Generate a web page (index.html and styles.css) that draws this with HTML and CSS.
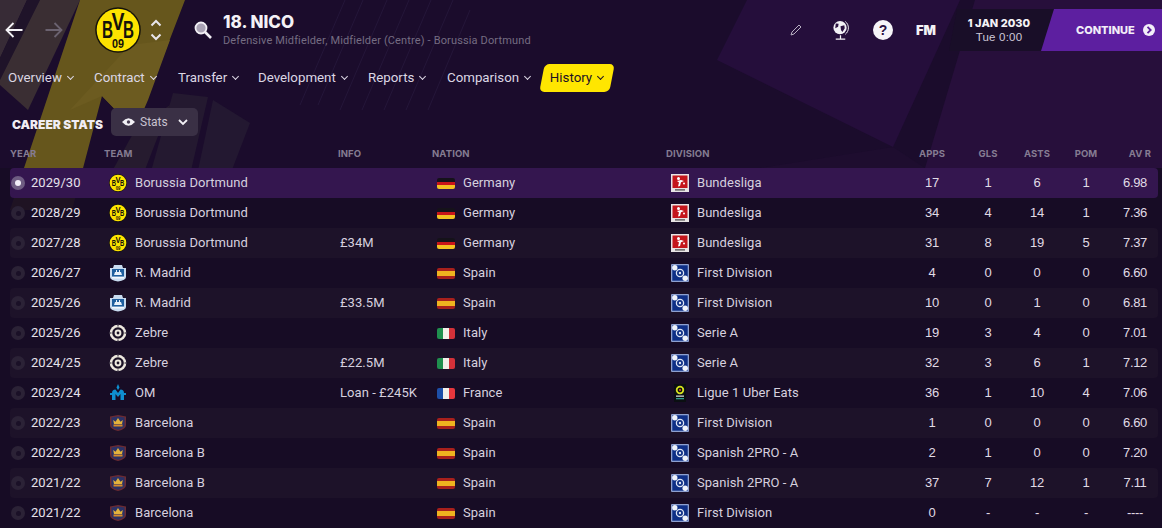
FILE: index.html
```html
<!DOCTYPE html>
<html lang="en">
<head>
<meta charset="utf-8">
<title>18. NICO - Career Stats</title>
<link rel="stylesheet" href="styles.css">
</head>
<body>
<svg class="defs" width="0" height="0" aria-hidden="true">
  <defs>
    <symbol id="bvb" viewBox="0 0 46 46">
      <circle cx="23" cy="23" r="22.8" fill="#15130a"/>
      <circle cx="23" cy="23" r="21.300" fill="#fde300"/>
      <text x="12.500" y="31" class="bvb-l" textLength="11" lengthAdjust="spacingAndGlyphs">B</text>
      <text x="23" y="23" class="bvb-l" textLength="13" lengthAdjust="spacingAndGlyphs">V</text>
      <text x="33.500" y="31" class="bvb-l" textLength="11" lengthAdjust="spacingAndGlyphs">B</text>
      <text x="23" y="41" class="bvb-n" textLength="12" lengthAdjust="spacingAndGlyphs">09</text>
    </symbol>
    <symbol id="madrid" viewBox="0 0 18 18">
      <path d="M1 4h3l1-3h8l1 3h3v9q0 3-8 4.500q-8-1.500-8-4.500z" fill="#c9dcf0"/>
      <rect x="3" y="5" width="12" height="7.500" fill="#1f5f9e"/>
      <path d="M5 11l1-3h1v-2h1v2h2v-2h1v2h1l1 3z" fill="#e8f1fa"/>
      <rect x="3" y="13" width="12" height="1.500" fill="#f4f8fc"/>
    </symbol>
    <symbol id="zebre" viewBox="0 0 18 18">
      <circle cx="9" cy="9" r="8.300" fill="#eee9df"/>
      <circle cx="9" cy="9" r="5.800" fill="#1b1226"/>
      <circle cx="9" cy="9" r="3.400" fill="#eee9df"/>
      <circle cx="9" cy="9" r="1.400" fill="#1b1226"/>
      <path d="M9 .500v2M9 15.500v2M.5 9h2M15.500 9h2" stroke="#1b1226" stroke-width="1"/>
    </symbol>
    <symbol id="om" viewBox="0 0 18 18">
      <path d="M9 0l1.500 3.500L9 6 7.500 3.500z" fill="#0f8fd0"/>
      <path d="M3 16V9q0-3.500 3.500-3.500L9 9l2.500-3.500Q15 5.500 15 9v7h-3.500V10L9 13l-2.500-3v6z" fill="#0f8fd0"/>
      <rect x="1" y="9" width="3" height="2" fill="#0f8fd0"/><rect x="14" y="9" width="3" height="2" fill="#0f8fd0"/>
    </symbol>
    <symbol id="barca" viewBox="0 0 18 18">
      <path d="M1 2.500L9 1l8 1.500v8.500q0 4-8 6q-8-2-8-6z" fill="#6a2b33"/>
      <path d="M2.500 3.500L9 2.400l6.500 1.100v7.500q0 3-6.500 4.700q-6.500-1.700-6.500-4.700z" fill="#2b3266"/>
      <path d="M5 10l-.8-4 2.300 1.800L9 4l2.500 3.800L13.800 6 13 10z" fill="#e3b23c"/>
      <rect x="4.500" y="10.500" width="9" height="2" fill="#d98c2b"/>
    </symbol>
    <symbol id="bundes" viewBox="0 0 18 18">
      <rect width="18" height="18" fill="#e8e4e4"/>
      <rect x="1.500" y="1.500" width="15" height="12.500" fill="#c4161c"/>
      <circle cx="7.500" cy="4.500" r="1.500" fill="#fff"/>
      <path d="M6 7l4-1 3 1-3 1.200-1 3.800-2 .5 1-4z" fill="#fff"/>
      <circle cx="13" cy="9.500" r="1" fill="#fff"/>
      <rect x="4" y="15.300" width="10" height="1.200" fill="#444"/>
    </symbol>
    <symbol id="league" viewBox="0 0 18 18">
      <rect width="18" height="18" rx="1" fill="#8ea0cf"/>
      <rect x="1.300" y="1.300" width="15.400" height="15.400" fill="#0e2f86"/>
      <circle cx="9" cy="9" r="3.600" fill="none" stroke="#dfe6f5" stroke-width="1.300"/>
      <circle cx="9" cy="9" r="1.200" fill="#dfe6f5"/>
      <circle cx="3.800" cy="3.800" r="2.700" fill="#f0f3fa"/>
      <circle cx="14.200" cy="14.200" r="2.700" fill="#f0f3fa"/>
    </symbol>
    <symbol id="ligue1" viewBox="0 0 18 18">
      <rect x="3" width="12" height="18" fill="#0b0f12"/>
      <circle cx="9" cy="6" r="3.300" fill="none" stroke="#d6e21f" stroke-width="1.800"/>
      <circle cx="9" cy="6" r="1" fill="#f05a28"/>
      <rect x="5" y="11.500" width="8" height="1.300" fill="#cfd8d8"/>
      <rect x="5" y="14" width="8" height="1.300" fill="#2f9e8a"/>
    </symbol>
  </defs>
</svg>

<main class="app">
  <svg class="backdrop" viewBox="0 0 1162 528" preserveAspectRatio="none" aria-hidden="true">
    <rect width="1162" height="528" fill="#1b0c2c"/>
    <polygon points="0,0 27,0 0,58" fill="#372b36"/>
    <polygon points="27,0 40,0 0,80 0,58" fill="#1f1329"/>
    <polygon points="40,0 80,0 28,110 0,85 0,80" fill="#3a2e33"/>
    <polygon points="80,0 185,0 135,130 102,96 72,210 10,210" fill="#66561c"/>
    <polygon points="130,45 170,40 148,100 135,130 102,96 70,110" fill="#6c5b20"/>
    <polygon points="135,130 170,105 143,175 110,175" fill="#261b2f"/>
    <polygon points="173,93 208,97 190,175 150,175" fill="#241930"/>
    <polygon points="213,100 250,123 230,175 197,175" fill="#231831"/>
    <g stroke="#2e2046" stroke-width="1" opacity=".5">
      <path d="M300 105L345 0M318 105L363 0M340 110L387 0M362 110L409 0M384 110L431 0M406 110L453 0M428 110L470 10"/>
    </g>
    <polygon points="747,0 960,0 893,147 717,60" fill="#250e3b"/>
    <polygon points="975,0 1162,0 1162,168 925,168" fill="#270f3b"/>
    <polygon points="893,147 925,168 760,168" fill="#1e0d2f"/>
    <rect y="168" width="1162" height="360" fill="#170c25" opacity=".9"/>
  </svg>

  <header class="topbar">
    <button class="arrow" aria-label="Back">
      <svg viewBox="0 0 18 18" class="arrow-icon"><path d="M17.500 9H1.500M8.500 2L1.500 9l7 7" fill="none" stroke="currentColor" stroke-width="1.800"/></svg>
    </button>
    <button class="arrow arrow-off" aria-label="Forward">
      <svg viewBox="0 0 18 18" class="arrow-icon"><path d="M.5 9h16M9.500 2l7 7-7 7" fill="none" stroke="currentColor" stroke-width="1.800"/></svg>
    </button>
    <svg class="club-badge"><use href="#bvb"/></svg>
    <div class="stepper">
      <svg viewBox="0 0 12 8" class="step"><path d="M1.500 6.500L6 2l4.500 4.500" fill="none" stroke="currentColor" stroke-width="2"/></svg>
      <svg viewBox="0 0 12 8" class="step"><path d="M1.500 1.500L6 6l4.500-4.500" fill="none" stroke="currentColor" stroke-width="2"/></svg>
    </div>
    <svg class="search" viewBox="0 0 18 18"><circle cx="7" cy="7" r="5.500" fill="#a9a2b4" stroke="#f2f0f5" stroke-width="1.800"/><path d="M11 11l6 6" stroke="#f2f0f5" stroke-width="2.600"/></svg>
    <div class="title-block">
      <h1 class="player-name">18. NICO</h1>
      <p class="player-sub">Defensive Midfielder, Midfielder (Centre) - Borussia Dortmund</p>
    </div>
    <div class="top-actions">
      <svg class="pencil" viewBox="0 0 14 14"><path d="M2 12l1-3 7-7 2 2-7 7z" fill="none" stroke="#b8b0c2" stroke-width="1"/></svg>
      <svg class="globe" viewBox="0 0 20 22"><circle cx="9.500" cy="8" r="7" fill="#f2f0f5"/><path d="M5 3.500l3 .5-.5 3-3 1.500zM10 6.500l4-1 .5 3-2.500 4-1.500-2z" fill="#2a1040"/><path d="M15 1.500a8.500 8.500 0 0 1 0 13.500" fill="none" stroke="#f2f0f5" stroke-width="1"/><path d="M5 20h10M10 16v4" stroke="#f2f0f5" stroke-width="1.300"/></svg>
      <span class="help">?</span>
      <span class="fm">FM</span>
      <div class="date-box">
        <strong class="date-main">1 JAN 2030</strong>
        <span class="date-time">Tue 0:00</span>
      </div>
      <button class="continue">CONTINUE
        <svg class="continue-icon" viewBox="0 0 12 12"><circle cx="6" cy="6" r="6" fill="#f2eef8"/><path d="M4.500 2.800L7.700 6l-3.200 3.200" fill="none" stroke="#5c1f9e" stroke-width="1.800"/></svg>
      </button>
    </div>
  </header>

  <nav class="tabs">
    <a class="tab tab-overview">Overview <i class="caret"></i></a>
    <a class="tab tab-contract">Contract <i class="caret"></i></a>
    <a class="tab tab-transfer">Transfer <i class="caret"></i></a>
    <a class="tab tab-dev">Development <i class="caret"></i></a>
    <a class="tab tab-reports">Reports <i class="caret"></i></a>
    <a class="tab tab-compare">Comparison <i class="caret"></i></a>
    <a class="tab tab-active">History <i class="caret"></i></a>
  </nav>

  <div class="section-head">
    <h2 class="section-title">CAREER STATS</h2>
    <button class="view-btn">
      <svg class="eye" viewBox="0 0 14 10"><path d="M0 5q7-8 14 0q-7 8-14 0z" fill="#f2f0f5"/><circle cx="7" cy="5" r="1.800" fill="#463c52"/></svg>
      Stats
      <svg class="view-caret" viewBox="0 0 10 7"><path d="M1 1l4 4 4-4" fill="none" stroke="#f2f0f5" stroke-width="1.800"/></svg>
    </button>
  </div>

  <section class="table">
    <div class="grid col-head">
      <span>YEAR</span><span>TEAM</span><span>INFO</span><span>NATION</span><span>DIVISION</span>
      <span class="num">APPS</span><span class="num">GLS</span><span class="num">ASTS</span><span class="num">POM</span><span class="num avr-head">AV R</span>
    </div>

    <div class="grid row row-selected">
      <span class="year"><i class="radio radio-on"></i>2029/30</span>
      <span class="icon-cell"><svg class="crest"><use href="#bvb"/></svg>Borussia Dortmund</span>
      <span class="info"></span>
      <span class="icon-cell"><i class="flag flag-de"></i>Germany</span>
      <span class="icon-cell"><svg class="crest"><use href="#bundes"/></svg>Bundesliga</span>
      <span class="num">17</span><span class="num">1</span><span class="num">6</span><span class="num">1</span><span class="num">6.98</span>
    </div>
    <div class="grid row">
      <span class="year"><i class="radio"></i>2028/29</span>
      <span class="icon-cell"><svg class="crest"><use href="#bvb"/></svg>Borussia Dortmund</span>
      <span class="info"></span>
      <span class="icon-cell"><i class="flag flag-de"></i>Germany</span>
      <span class="icon-cell"><svg class="crest"><use href="#bundes"/></svg>Bundesliga</span>
      <span class="num">34</span><span class="num">4</span><span class="num">14</span><span class="num">1</span><span class="num">7.36</span>
    </div>
    <div class="grid row row-alt">
      <span class="year"><i class="radio"></i>2027/28</span>
      <span class="icon-cell"><svg class="crest"><use href="#bvb"/></svg>Borussia Dortmund</span>
      <span class="info">£34M</span>
      <span class="icon-cell"><i class="flag flag-de"></i>Germany</span>
      <span class="icon-cell"><svg class="crest"><use href="#bundes"/></svg>Bundesliga</span>
      <span class="num">31</span><span class="num">8</span><span class="num">19</span><span class="num">5</span><span class="num">7.37</span>
    </div>
    <div class="grid row">
      <span class="year"><i class="radio"></i>2026/27</span>
      <span class="icon-cell"><svg class="crest"><use href="#madrid"/></svg>R. Madrid</span>
      <span class="info"></span>
      <span class="icon-cell"><i class="flag flag-es"></i>Spain</span>
      <span class="icon-cell"><svg class="crest"><use href="#league"/></svg>First Division</span>
      <span class="num">4</span><span class="num">0</span><span class="num">0</span><span class="num">0</span><span class="num">6.60</span>
    </div>
    <div class="grid row row-alt">
      <span class="year"><i class="radio"></i>2025/26</span>
      <span class="icon-cell"><svg class="crest"><use href="#madrid"/></svg>R. Madrid</span>
      <span class="info">£33.5M</span>
      <span class="icon-cell"><i class="flag flag-es"></i>Spain</span>
      <span class="icon-cell"><svg class="crest"><use href="#league"/></svg>First Division</span>
      <span class="num">10</span><span class="num">0</span><span class="num">1</span><span class="num">0</span><span class="num">6.81</span>
    </div>
    <div class="grid row">
      <span class="year"><i class="radio"></i>2025/26</span>
      <span class="icon-cell"><svg class="crest"><use href="#zebre"/></svg>Zebre</span>
      <span class="info"></span>
      <span class="icon-cell"><i class="flag flag-it"></i>Italy</span>
      <span class="icon-cell"><svg class="crest"><use href="#league"/></svg>Serie A</span>
      <span class="num">19</span><span class="num">3</span><span class="num">4</span><span class="num">0</span><span class="num">7.01</span>
    </div>
    <div class="grid row row-alt">
      <span class="year"><i class="radio"></i>2024/25</span>
      <span class="icon-cell"><svg class="crest"><use href="#zebre"/></svg>Zebre</span>
      <span class="info">£22.5M</span>
      <span class="icon-cell"><i class="flag flag-it"></i>Italy</span>
      <span class="icon-cell"><svg class="crest"><use href="#league"/></svg>Serie A</span>
      <span class="num">32</span><span class="num">3</span><span class="num">6</span><span class="num">1</span><span class="num">7.12</span>
    </div>
    <div class="grid row">
      <span class="year"><i class="radio"></i>2023/24</span>
      <span class="icon-cell"><svg class="crest"><use href="#om"/></svg>OM</span>
      <span class="info">Loan - £245K</span>
      <span class="icon-cell"><i class="flag flag-fr"></i>France</span>
      <span class="icon-cell"><svg class="crest"><use href="#ligue1"/></svg>Ligue 1 Uber Eats</span>
      <span class="num">36</span><span class="num">1</span><span class="num">10</span><span class="num">4</span><span class="num">7.06</span>
    </div>
    <div class="grid row row-alt">
      <span class="year"><i class="radio"></i>2022/23</span>
      <span class="icon-cell"><svg class="crest"><use href="#barca"/></svg>Barcelona</span>
      <span class="info"></span>
      <span class="icon-cell"><i class="flag flag-es"></i>Spain</span>
      <span class="icon-cell"><svg class="crest"><use href="#league"/></svg>First Division</span>
      <span class="num">1</span><span class="num">0</span><span class="num">0</span><span class="num">0</span><span class="num">6.60</span>
    </div>
    <div class="grid row">
      <span class="year"><i class="radio"></i>2022/23</span>
      <span class="icon-cell"><svg class="crest"><use href="#barca"/></svg>Barcelona B</span>
      <span class="info"></span>
      <span class="icon-cell"><i class="flag flag-es"></i>Spain</span>
      <span class="icon-cell"><svg class="crest"><use href="#league"/></svg>Spanish 2PRO - A</span>
      <span class="num">2</span><span class="num">1</span><span class="num">0</span><span class="num">0</span><span class="num">7.20</span>
    </div>
    <div class="grid row row-alt">
      <span class="year"><i class="radio"></i>2021/22</span>
      <span class="icon-cell"><svg class="crest"><use href="#barca"/></svg>Barcelona B</span>
      <span class="info"></span>
      <span class="icon-cell"><i class="flag flag-es"></i>Spain</span>
      <span class="icon-cell"><svg class="crest"><use href="#league"/></svg>Spanish 2PRO - A</span>
      <span class="num">37</span><span class="num">7</span><span class="num">12</span><span class="num">1</span><span class="num">7.11</span>
    </div>
    <div class="grid row">
      <span class="year"><i class="radio"></i>2021/22</span>
      <span class="icon-cell"><svg class="crest"><use href="#barca"/></svg>Barcelona</span>
      <span class="info"></span>
      <span class="icon-cell"><i class="flag flag-es"></i>Spain</span>
      <span class="icon-cell"><svg class="crest"><use href="#league"/></svg>First Division</span>
      <span class="num">0</span><span class="num">-</span><span class="num">-</span><span class="num">-</span><span class="num">----</span>
    </div>
  </section>
</main>
</body>
</html>
```

FILE: styles.css
```css
* { box-sizing: border-box; }

html, body {
  margin: 0;
  padding: 0;
  background: #170c25;
}

.defs { position: absolute; }

.bvb-l {
  font-family: "Liberation Sans", sans-serif;
  font-weight: 700;
  font-size: 23px;
  text-anchor: middle;
  fill: #15130a;
}
.bvb-n {
  font-family: "Liberation Sans", sans-serif;
  font-weight: 700;
  font-size: 12px;
  text-anchor: middle;
  fill: #15130a;
}

.app {
  position: relative;
  width: 1162px;
  height: 528px;
  overflow: hidden;
  font-family: Roboto, "Liberation Sans", sans-serif;
  color: #dcd7e4;
}

.backdrop {
  position: absolute;
  inset: 0;
  width: 100%;
  height: 100%;
}

.topbar, .tabs, .section-head, .table { position: relative; }

/* Top bar */
.topbar {
  display: flex;
  align-items: center;
  height: 60px;
  padding-left: 5px;
}

.arrow {
  display: flex;
  width: 18px;
  height: 18px;
  margin-right: 22px;
  padding: 0;
  border: 0;
  background: none;
  color: #f4f2f6;
}
.arrow-off { color: #6b6270; margin-right: 32px; }
.arrow-icon { width: 18px; height: 18px; }

.club-badge { width: 46px; height: 46px; }

.stepper {
  display: flex;
  flex-direction: column;
  gap: 6px;
  margin-left: 9px;
  color: #e8e5ec;
}
.step { display: block; width: 12px; height: 8px; }

.search { width: 18px; height: 18px; margin-left: 32px; margin-top: -1px; }

.title-block {
  align-self: flex-start;
  margin-left: 11px;
  padding-top: 12px;
}

.player-name {
  margin: 0;
  font-family: Inter, sans-serif;
  font-size: 17px;
  line-height: 20px;
  font-weight: 800;
  color: #f4f2f6;
}

.player-sub {
  margin: 2px 0 0;
  font-size: 11px;
  line-height: 13px;
  color: #756c82;
  letter-spacing: .14px;
}

.top-actions {
  display: flex;
  align-items: center;
  margin-left: auto;
  height: 42px;
}

.pencil { width: 14px; height: 14px; margin-right: 28px; }
.globe { width: 19px; height: 21px; margin-right: 23px; }

.help {
  display: flex;
  align-items: center;
  justify-content: center;
  width: 20px;
  height: 20px;
  margin-right: 23px;
  border-radius: 50%;
  background: #f6f4f8;
  color: #2a1040;
  font: 700 14px "Liberation Sans", sans-serif;
}

.fm {
  width: 33px;
  font: 900 13px Inter, sans-serif;
  color: #f4f2f6;
}

.date-box {
  display: flex;
  flex-direction: column;
  align-items: center;
  justify-content: center;
  width: 106px;
  height: 42px;
  margin-right: -14px;
  padding-right: 6px;
  background: #190e28;
  clip-path: polygon(8px 0, 100% 0, 100% 100%, 0 100%);
}
.date-main {
  font: 800 11px/14px Inter, sans-serif;
  color: #f4f2f6;
}
.date-time {
  font: 400 11.500px/15px "Liberation Sans", sans-serif;
  color: #cfc9d8;
  letter-spacing: .2px;
}

.continue {
  display: flex;
  align-items: center;
  position: relative;
  width: 121px;
  height: 42px;
  padding: 0 0 0 35px;
  border: 0;
  background: #5d1fa0;
  clip-path: polygon(13px 0, 100% 0, 100% 100%, 0 100%);
  color: #f2eef8;
  font: 800 11px Inter, sans-serif;
}
.continue-icon { width: 12px; height: 12px; margin-left: 8px; flex: none; }

/* Tabs */
.tabs {
  display: flex;
  align-items: center;
  height: 28px;
  margin-top: 4px;
  padding-left: 8px;
}
.tab {
  display: flex;
  align-items: center;
  gap: 5px;
  height: 28px;
  padding-bottom: 2px;
  font-size: 13.300px;
  color: #dcd7e4;
}
.tab-overview { width: 86px; }
.tab-contract { width: 84px; }
.tab-transfer { width: 80px; }
.tab-dev { width: 110px; }
.tab-reports { width: 79px; }
.tab-compare { width: 93px; }
.tab-active {
  position: relative;
  z-index: 0;
  justify-content: center;
  width: 74px;
  color: #1c1024;
}
.tab-active::before {
  content: "";
  position: absolute;
  inset: 0 2px;
  z-index: -1;
  background: #ffe600;
  border-radius: 5px;
  transform: skewX(-11deg);
}
.caret {
  width: 5px;
  height: 5px;
  margin: -2px 1px 0 1px;
  border-right: 1.300px solid currentColor;
  border-bottom: 1.300px solid currentColor;
  transform: rotate(45deg);
}

/* Section head */
.section-head {
  display: flex;
  align-items: center;
  height: 28px;
  margin-top: 16px;
  padding-left: 12px;
}
.section-title {
  width: 99px;
  margin: 4px 0 0;
  font: 900 12px Inter, sans-serif;
  color: #f0edf3;
  white-space: nowrap;
}
.view-btn {
  display: flex;
  align-items: center;
  width: 87px;
  height: 28px;
  padding: 0 0 0 11px;
  border: 0;
  border-radius: 5px;
  background: #3a3045;
  color: #c8c2d0;
  font: 400 12px Roboto, sans-serif;
}
.eye { width: 13px; height: 10px; margin-right: 5px; }
.view-caret { width: 10px; height: 7px; margin-left: 10px; }

/* Table */
.table { margin: 3px 4px 0 10px; }

.grid {
  display: grid;
  grid-template-columns: 94px 234px 94px 234px 238px 56px 56px 42px 56px 42px;
  align-items: center;
}

.col-head {
  height: 29px;
  font: 700 9.500px Inter, sans-serif;
  color: #857c92;
  letter-spacing: .1px;
}
.num { text-align: center; }
.avr-head { padding-left: 10px; white-space: nowrap; }

.row {
  height: 30px;
  padding-bottom: 2px;
  font-size: 13px;
  letter-spacing: .05px;
  color: #d6d0df;
  border-radius: 4px;
}
.row .num {
  font-family: "Liberation Sans", sans-serif;
  font-size: 13px;
  letter-spacing: -.35px;
  color: #e0dbe6;
}
.row-selected { background: #34164f; }
.row-alt { background: #1d1229; }

.year {
  display: flex;
  align-items: center;
  gap: 6px;
  padding-left: 1px;
  color: #e6e2ec;
}

.radio {
  flex: none;
  display: flex;
  align-items: center;
  justify-content: center;
  width: 14px;
  height: 14px;
  margin-top: 2px;
  border-radius: 50%;
  background: #2b2236;
}
.radio::after {
  content: "";
  width: 5px;
  height: 5px;
  border-radius: 50%;
  background: #1a1027;
}
.radio-on { background: #6e5c82; }
.radio-on::after { width: 6px; height: 6px; background: #f2eef8; }

.icon-cell {
  display: flex;
  align-items: center;
  gap: 8px;
  padding-left: 5px;
  white-space: nowrap;
}
.crest { width: 18px; height: 18px; flex: none; margin-top: 2px; }

.info { padding-left: 2px; white-space: nowrap; }

.flag {
  flex: none;
  width: 18px;
  height: 11px;
  margin-top: 2px;
  border-radius: 2px;
}
.flag-de { background: linear-gradient(#15121a 0 33%, #c8141a 33% 66%, #f3c121 66%); }
.flag-es { background: linear-gradient(#a8201c 0 25%, #efb31f 25% 75%, #a8201c 75%); }
.flag-it { background: linear-gradient(90deg, #1f8f4e 0 33%, #f2f0ea 33% 66%, #d43139 66%); }
.flag-fr { background: linear-gradient(90deg, #1d4fa8 0 33%, #f2f0ea 33% 66%, #e6373d 66%); }
```
